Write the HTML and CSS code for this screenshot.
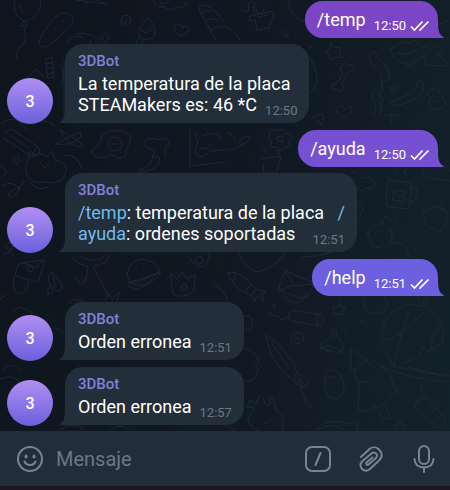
FILE: index.html
```html
<!DOCTYPE html>
<html lang="es">
<head>
<meta charset="utf-8">
<meta name="viewport" content="width=device-width, initial-scale=1">
<title>3DBot</title>
<link rel="stylesheet" href="styles.css">
</head>
<body>
<svg class="defs" width="0" height="0" aria-hidden="true">
  <symbol id="checks" viewBox="0 0 20 12">
    <path d="M1 6.500 4.500 10 12.500 1.500M9.500 9.500 10 10 18.500 1.500" fill="none" stroke="currentColor" stroke-width="1.700"/>
  </symbol>
  <symbol id="tail" viewBox="0 0 12 16">
    <path d="M6 0C6 8 5 13 0.500 15Q0 16 1 16H12V0Z" fill="currentColor"/>
  </symbol>
</svg>
<div class="app">
  <main class="chat">
    <svg class="doodles" viewBox="0 0 450 431" preserveAspectRatio="xMidYMin slice" aria-hidden="true">
      <!-- top left: balloon, cucumber, paper plane, ghost -->
      <path d="M15 0C12 9 17 18 24 21C34 20 43 10 40 0M24 21L20 26H27ZM25 26C22 34 30 38 22 45Q15 51 17 58M20 4Q20 9 23 12"/>
      <path d="M41 37C46 27 55 15 63 13C73 12 76 21 70 27C61 34 54 43 46 47C38 48 38 42 41 37ZM50 35h1M56 28h1M62 21h1"/>
      <path d="M76 0 107 4 97 0M87 2 84 5"/>
      <path d="M126 23C122 24 120 19 123 16C127 14 132 18 130 23C126 28 119 25 121 20M126 20h1"/>
      <path d="M139 37Q138 26 149 18Q156 27 155 35Q148 43 139 37M142 31 146 33 149 29 153 32M139 38 136 43M143 40 141 44"/>
      <path d="M181 36C171 32 173 24 179 24Q182 24 182 28Q188 24 189 28Q189 34 181 36Z"/>
      <path d="M66 42C72 38 76 31 86 34C94 34 98 41 103 40C99 35 105 31 109 36C108 43 102 46 96 44M76 38Q80 34 84 39M90 43 91 40"/>
      <path d="M154 1Q156 8 164 7Q170 12 176 7Q184 10 187 2M160 3Q164 5 168 2"/>
      <path d="M202 5Q197 5 200 12L216 40M203 5Q210 5 218 14L225 24M201 13Q207 9 212 12M206 21Q213 17 218 20M211 30Q218 24 223 28"/>
      <path d="M46 59 52 57 54 77 48 78ZM47 64 53 62M47 69 54 67M48 74 54 72M26 79 36 69 43 76"/>
      <path d="M64 60V116M61 66Q66 72 61 86M10 72h1M95 20h1M1 59h1"/>
      <path d="M2 123Q10 116 19 122L27 130M32 124Q43 117 54 125"/>
      <!-- top right: cactus, cloud, bone, worms, fish, chick -->
      <path d="M224 26C233 29 235 34 240 40M242 7Q242 13 249 11L248 4Q252 0 255 3L257 13Q264 15 264 7M250 16 273 11 274 19 271 20 269 28 257 30 255 20 250 21ZM253 5 254 12M258 17 268 15"/>
      <path d="M290 0Q286 8 293 14L300 21 306 20M288 36C281 38 279 30 285 30Q290 31 288 34L286 34"/>
      <path d="M331 43 335 48 341 47 339 53 342 58 335 57 330 60 329 54 325 51 330 49ZM332 51h1M336 51h1"/>
      <path d="M340 68Q344 61 348 65Q356 64 354 70Q348 71 346 75L342 83Q346 90 340 91Q337 92 336 89Q330 90 332 85Q337 83 339 80L343 73Q340 72 340 68Z"/>
      <path d="M371 53Q366 58 374 66Q382 70 381 79Q386 84 389 78Q389 66 381 62Q377 60 377 55Q374 50 371 53M382 80v10l-2 5 3 5-2 6"/>
      <path d="M394 88Q390 92 394 89M392 91C389 84 397 82 398 88Q397 94 391 92M391 103Q402 98 410 93Q417 89 417 83Q422 77 423 83Q425 93 413 99Q403 106 396 105Q391 107 391 103"/>
      <path d="M344 118C335 114 335 106 341 106Q345 106 345 110Q351 104 352 108Q352 114 344 118ZM375 91Q370 95 373 101Q378 105 373 116M376 91Q381 94 378 99Q383 105 379 116"/>
      <path d="M389 50Q400 44 402 41 408 46 414 40Q421 47 426 48M391 51Q394 63 410 65L425 55M397 53Q408 57 417 49M423 49Q427 42 431 49Q440 41 443 51L436 55Q450 60 447 66L427 65Q422 61 427 56M421 0Q410 6 418 12M429 20Q436 28 448 21"/>
      <path d="M431 98Q425 92 431 89Q439 87 440 95Q448 99 445 106Q439 113 430 107Q427 101 431 98ZM427 95 424 97M433 94h1M434 100Q438 104 441 100M405 75h1M365 93h1M385 115h12M391 115v10M413 120h5"/>
      <path d="M299 45Q312 56 316 72Q320 88 308 93M309 47h4M312 119Q316 112 323 115Q325 121 321 125M313 116 322 125"/>
      <!-- second row -->
      <path d="M5 132 12 129 38 147Q42 152 36 156L31 156 3 138M11 136 30 149M32 155 37 147M56 144Q66 138 80 132Q83 138 76 141Q65 146 56 144M60 130Q72 136 82 144Q78 149 70 143Q62 137 60 130"/>
      <path d="M92 151Q95 146 100 143Q100 133 111 131Q127 129 131 138Q129 145 126 150Q128 159 118 158Q111 152 105 157Q94 160 92 151ZM108 144a7 7 0 1 0 14 0a7 7 0 1 0-14 0M112 144h1M117 144h1"/>
      <path d="M144 141Q143 147 151 149Q158 151 152 156M145 140Q152 137 158 140Q170 135 169 145Q162 149 166 156M153 157 159 157 160 163 153 169 140 173M153 157 149 165 141 170"/>
      <path d="M190 130V166L225 162M197 131Q193 136 198 140L195 154Q204 160 210 151L225 150M202 136Q213 130 222 138M200 148Q207 151 211 144"/>
      <path d="M28 157 30 151 35 155Q44 152 47 157L52 151 55 160Q70 162 65 175Q62 185 47 182Q28 185 26 172Q25 161 30 157M39 162h1M49 162h1M42 165 45 168 48 165M65 155Q79 155 81 168M31 183Q36 192 48 187M14 158Q12 163 17 164Q22 160 17 156"/>
      <path d="M1 165Q10 172 3 176M2 186Q13 179 20 190M8 195Q13 188 20 187 18 195 11 197ZM20 187 24 182M137 174 142 168M10 242 13 248 8 250Q3 246 8 244Z"/>
      <!-- flower, cat, mug, strawberry -->
      <path d="M270 136Q267 129 275 130L279 131Q283 127 287 134Q296 135 289 141Q292 149 285 147Q279 154 277 147Q268 149 272 142Q265 139 270 136M277 139a3 3 0 1 0 6 0a3 3 0 1 0-6 0M278 150 279 158M260 159 281 156 280 161 276 173 264 173 263 164M266 154Q265 147 262 146M226 148Q232 154 241 145 250 142 250 137Q243 134 239 143M226 132Q231 133 236 139"/>
      <path d="M351 173Q357 169 362 178Q370 176 376 184Q374 190 366 188Q360 194 357 187Q346 187 347 181M389 180 412 183 409 209 388 207Q384 194 389 180ZM411 188Q419 185 417 194Q415 203 410 202M394 190 405 192 404 202 393 200ZM395 192 400 197 405 193M397 174q-4-4 0-9q-3-5 3-6M406 176q-4-4 2-8q-2-5 3-8"/>
      <path d="M424 212Q430 205 440 208Q449 210 448 219Q444 228 440 232Q426 228 424 219ZM431 210 434 205 438 207 441 203 443 209M430 215h1M437 214h1M443 218h1M433 221h1M439 224h1M354 210Q351 202 356 202Q363 202 363 210Q360 218 354 218M422 169 433 159 450 171M422 169l3 8 25 4M413 217h1"/>
      <path d="M367 235Q367 225 381 225L386 216Q391 222 395 218Q399 225 390 230Q396 238 387 246M368 232Q370 248 380 248M374 235Q377 228 383 231M390 245Q398 239 405 246L410 258M302 257Q334 258 356 236"/>
      <!-- third row -->
      <path d="M19 263 45 260 38 282 15 276ZM20 264Q27 262 36 268L42 261M27 269a3 3 0 1 0 6 0a3 3 0 1 0-6 0M14 277Q11 292 20 294Q29 292 28 281M52 272 60 282Q64 285 60 291Q53 292 55 284L52 272Q45 277 51 286Q56 294 48 294Q47 286 51 286M4 255 11 251 13 256M0 299 6 295"/>
      <path d="M72 257Q80 266 88 266L86 279M110 254Q108 265 93 266L109 297M86 278 80 284 76 278M87 279 84 284M80 256Q95 265 105 256M105 300 109 293 112 299 119 292 117 301"/>
      <path d="M127 274Q130 256 147 260Q160 264 159 272Q145 278 130 282ZM128 283Q144 281 161 272Q158 279 144 286Q132 294 128 283M131 283Q144 290 154 277M136 267h1M143 264h1M149 270h1"/>
      <path d="M171 274 177 279 182 272 187 279 195 275 194 291Q182 300 173 294ZM181 287a3 3 0 1 0 6 0a3 3 0 1 0-6 0M189 257Q195 269 204 266Q213 257 207 250M195 260a4 4 0 1 0 8 0a4 4 0 1 0-8 0M214 285Q223 288 228 301M219 264h1"/>
      <path d="M13 312 20 307 32 312 30 318M68 304 74 299 85 302M49 314h1M55 328Q60 327 63 335"/>
      <path d="M228 273Q236 270 246 279L256 289 251 296 242 291Q232 284 228 273ZM236 273 234 280M251 284 246 291M256 289 266 292 261 294 264 301 256 296 255 302 251 296M239 254Q245 270 259 272Q276 266 285 254"/>
      <path d="M281 280 286 271 314 283 308 296 300 298 279 290ZM286 272 295 286 312 284M280 290 294 285M283 293Q286 303 297 303Q307 300 306 291"/>
      <path d="M340 303 342 307 346 308 343 311 343 315 339 313 334 315 334 310 332 307 338 307ZM289 313Q291 310 297 311L321 315Q326 320 321 326L291 321Q287 317 289 313M288 317 282 320Q277 314 272 316M273 304l2 5M268 312l3 1M318 316Q315 320 318 325"/>
      <path d="M366 291Q359 307 369 312Q382 317 387 307Q389 300 383 295M369 296Q374 292 381 295M424 303Q418 303 418 297Q423 292 428 297Q430 304 421 306M424 298h1"/>
      <path d="M293 344Q289 342 292 336Q298 329 303 335Q306 342 297 344Q290 338 297 337Q301 340 297 340M321 344 333 336Q329 332 333 329Q338 330 336 335Q345 342 342 351L341 354 321 348ZM320 348Q330 343 342 352M326 349Q327 354 332 351M344 332l2 3M360 321h4M370 339h1M313 361h1M258 335h1"/>
      <path d="M382 340a31 31 0 1 1 61 2L428 352 422 346 419 356 405 363M382 340Q401 340 424 312M384 350 396 369M394 367Q398 341 409 312M442 325Q433 330 430 350M351 348 367 360 356 369Q350 374 351 367ZM366 361 375 368"/>
      <path d="M266 335Q280 342 294 365Q299 380 308 390M266 335Q269 355 280 368L298 385M271 342 289 368M241 350Q250 346 255 355Q263 360 255 367M244 316Q255 314 252 327Q249 334 241 327"/>
      <!-- fourth row -->
      <path d="M297 385Q292 378 296 374Q304 374 309 383L300 389 308 404Q315 407 310 407Q304 405 304 400M301 389 299 380M325 375Q331 365 340 374Q349 392 339 398Q325 401 325 384ZM327 380 330 376 332 379 336 376M354 368Q355 380 359 384L358 409Q367 414 373 407L381 407Q386 401 396 392Q399 387 393 386Q393 371 381 367M359 384Q364 377 371 386M377 410 383 419 390 418 386 406"/>
      <path d="M425 397 414 404 417 411 437 427Q445 428 446 419L430 402ZM416 404a6 4 -35 0 1 11-5M432 412 436 407M436 421 442 415M400 421 402 425 407 426 404 428 404 431M400 421 398 425 394 426 397 429 396 431M408 402h1M399 404h1M421 383v8"/>
      <path d="M248 418 255 406 247 408 250 400 256 404 259 396Q264 396 265 404L270 406Q269 396 271 396 276 402 276 410L283 416 283 431M248 418Q249 429 260 431M258 415h1M270 418h1M263 421 266 424 269 421M317 417h1M316 431Q324 417 344 423Q353 425 358 420L357 431M319 429Q332 422 345 430"/>
      <path d="M379 365Q405 379 450 382M390 366 450 376M409 367 440 376M245 381Q256 384 258 369M0 379Q15 372 22 386M3 370Q12 360 20 370M60 430Q73 420 85 430M110 430Q120 422 130 430M225 426 236 431"/>
    </svg>
    <ol class="messages">
      <li class="row row-out">
        <p class="bubble bubble-out tone-a">/temp <span class="meta"><time>12:50</time><svg class="checks" role="img" aria-label="Leído"><use href="#checks"/></svg></span><svg class="tail" aria-hidden="true"><use href="#tail"/></svg></p>
      </li>
      <li class="row row-in">
        <span class="avatar">3</span>
        <div class="bubble bubble-in">
          <svg class="tail" aria-hidden="true"><use href="#tail"/></svg>
          <h2 class="sender">3DBot</h2>
          <p>La temperatura de la placa</p>
          <p class="last-line">STEAMakers es: 46 *C <time class="meta">12:50</time></p>
        </div>
      </li>
      <li class="row row-out">
        <p class="bubble bubble-out tone-b">/ayuda <span class="meta"><time>12:50</time><svg class="checks" role="img" aria-label="Leído"><use href="#checks"/></svg></span><svg class="tail" aria-hidden="true"><use href="#tail"/></svg></p>
      </li>
      <li class="row row-in">
        <span class="avatar">3</span>
        <div class="bubble bubble-in">
          <svg class="tail" aria-hidden="true"><use href="#tail"/></svg>
          <h2 class="sender">3DBot</h2>
          <p><a href="#temp">/temp</a>: temperatura de la placa &nbsp; <a href="#ayuda">/</a></p>
          <p class="last-line"><span><a href="#ayuda">ayuda</a>: ordenes soportadas</span> <time class="meta">12:51</time></p>
        </div>
      </li>
      <li class="row row-out">
        <p class="bubble bubble-out tone-c">/help <span class="meta"><time>12:51</time><svg class="checks" role="img" aria-label="Leído"><use href="#checks"/></svg></span><svg class="tail" aria-hidden="true"><use href="#tail"/></svg></p>
      </li>
      <li class="row row-in">
        <span class="avatar">3</span>
        <div class="bubble bubble-in">
          <svg class="tail" aria-hidden="true"><use href="#tail"/></svg>
          <h2 class="sender">3DBot</h2>
          <p class="last-line">Orden erronea <time class="meta">12:51</time></p>
        </div>
      </li>
      <li class="row row-in">
        <span class="avatar">3</span>
        <div class="bubble bubble-in">
          <svg class="tail" aria-hidden="true"><use href="#tail"/></svg>
          <h2 class="sender">3DBot</h2>
          <p class="last-line">Orden erronea <time class="meta">12:57</time></p>
        </div>
      </li>
    </ol>
  </main>
  <form class="composer">
    <button class="icon" type="button" aria-label="Emoji">
      <svg viewBox="0 0 28 28"><circle cx="14" cy="14" r="12"/><path d="M8.500 16.500Q10 20 14 20T19.500 16.500"/><g class="solid"><ellipse cx="10" cy="11.500" rx="1.500" ry="2"/><ellipse cx="18" cy="11.500" rx="1.500" ry="2"/></g></svg>
    </button>
    <input class="field" type="text" placeholder="Mensaje" aria-label="Mensaje">
    <div class="actions">
      <button class="icon" type="button" aria-label="Comandos">
        <svg viewBox="0 0 28 28"><rect x="2" y="2" width="24" height="24" rx="6"/><path d="M16.500 8 11.500 20"/></svg>
      </button>
      <button class="icon" type="button" aria-label="Adjuntar">
        <svg viewBox="0 0 28 28"><path d="M4 12 12 4.500C15 1.500 19 1.500 22 4.500C25.500 8 25.500 12 22.500 15L13 24C10 26.500 7 26 5 24C3 21.500 3 18.500 5.500 16L14.500 8.500C16.500 7 18.500 7.500 19.500 9C20.500 10.500 20 12 18.500 13.500L11.500 19.500C10 20.500 8.500 19 9.500 17.500L15.500 12.500"/></svg>
      </button>
      <button class="icon" type="button" aria-label="Grabar voz">
        <svg viewBox="0 0 28 28"><rect x="9" y="1" width="10" height="18" rx="5"/><path d="M4.500 14C5 20 9 22.500 14 22.500S23 20 23.500 14M14 22.500V27"/></svg>
      </button>
    </div>
  </form>
</div>
</body>
</html>
```
FILE: styles.css
```css
* {
  box-sizing: border-box;
}

body,
h2,
p,
ol {
  margin: 0;
  padding: 0;
}

body {
  background: #1a171f;
  color: #fff;
  font: 18px/21px Roboto, "Liberation Sans", sans-serif;
}

.defs {
  position: absolute;
}

.app {
  display: flex;
  flex-direction: column;
  min-height: 100vh;
  padding-bottom: 4px;
}

.chat {
  position: relative;
  flex: 1;
  overflow: hidden;
  background: linear-gradient(100deg, #0e151f, #101822 50%, #13212b);
}

.doodles {
  position: absolute;
  inset: 0;
  width: 100%;
  height: 100%;
  fill: none;
  stroke: #1d2935;
  stroke-linecap: round;
  stroke-linejoin: round;
}

.messages {
  position: relative;
  display: flex;
  flex-direction: column;
  gap: 6px;
  padding: 1px 12px 5px 7px;
  list-style: none;
}

.row {
  display: flex;
  align-items: flex-end;
}

.row-out {
  justify-content: flex-end;
}

.row-in {
  gap: 12px;
}

.avatar {
  display: flex;
  align-items: center;
  justify-content: center;
  width: 46px;
  height: 46px;
  border-radius: 50%;
  background: linear-gradient(#b18ff2, #6b60dc);
  font-size: 16px;
  font-weight: 500;
}

.bubble {
  position: relative;
  padding: 8px 12px;
  border-radius: 18px;
}

.bubble-in {
  margin-bottom: 1px;
  padding-left: 13px;
  border-bottom-left-radius: 0;
  background: #222e39;
}

.bubble-out {
  display: flex;
  gap: 8px;
  padding-right: 8px;
  border-bottom-right-radius: 0;
  background: var(--tone);
}

.tone-a {
  --tone: #7b46c5;
}

.tone-b {
  --tone: #7550d0;
}

.tone-c {
  --tone: #6c5fe0;
}

.tail {
  position: absolute;
  bottom: 0;
  width: 12px;
  height: 16px;
}

.bubble-in .tail {
  left: -6px;
  color: #222e39;
}

.bubble-out .tail {
  right: -6px;
  color: var(--tone);
  transform: scaleX(-1);
}

.sender {
  margin-bottom: 3px;
  color: #8480dc;
  font-size: 15px;
  font-weight: 500;
  line-height: 18px;
}

.bubble a {
  color: #74b8ec;
  text-decoration: none;
}

.last-line {
  display: flex;
  justify-content: space-between;
  gap: 8px;
  height: 21px;
}

.meta {
  display: flex;
  align-items: center;
  gap: 4px;
  height: 21px;
  padding-top: 12px;
  font-size: 13px;
  line-height: 9px;
}

.bubble-in .meta {
  color: #6c7883;
}

.checks {
  width: 20px;
  height: 12px;
}

.composer {
  display: flex;
  align-items: center;
  gap: 12px;
  height: 55px;
  padding: 0 12px 0 16px;
  background: #212d3a;
}

.field {
  flex: 1;
  min-width: 0;
  padding: 0;
  border: 0;
  outline: 0;
  background: none;
  color: #fff;
  font: 20px/24px Roboto, "Liberation Sans", sans-serif;
}

.field::placeholder {
  color: #6b7884;
  opacity: 1;
}

.actions {
  display: flex;
  gap: 25px;
}

.icon {
  width: 28px;
  height: 28px;
  padding: 0;
  border: 0;
  background: none;
}

.icon svg {
  display: block;
  fill: none;
  stroke: #788591;
  stroke-width: 2;
  stroke-linecap: round;
  stroke-linejoin: round;
}

.icon .solid {
  fill: #788591;
  stroke: none;
}
```
